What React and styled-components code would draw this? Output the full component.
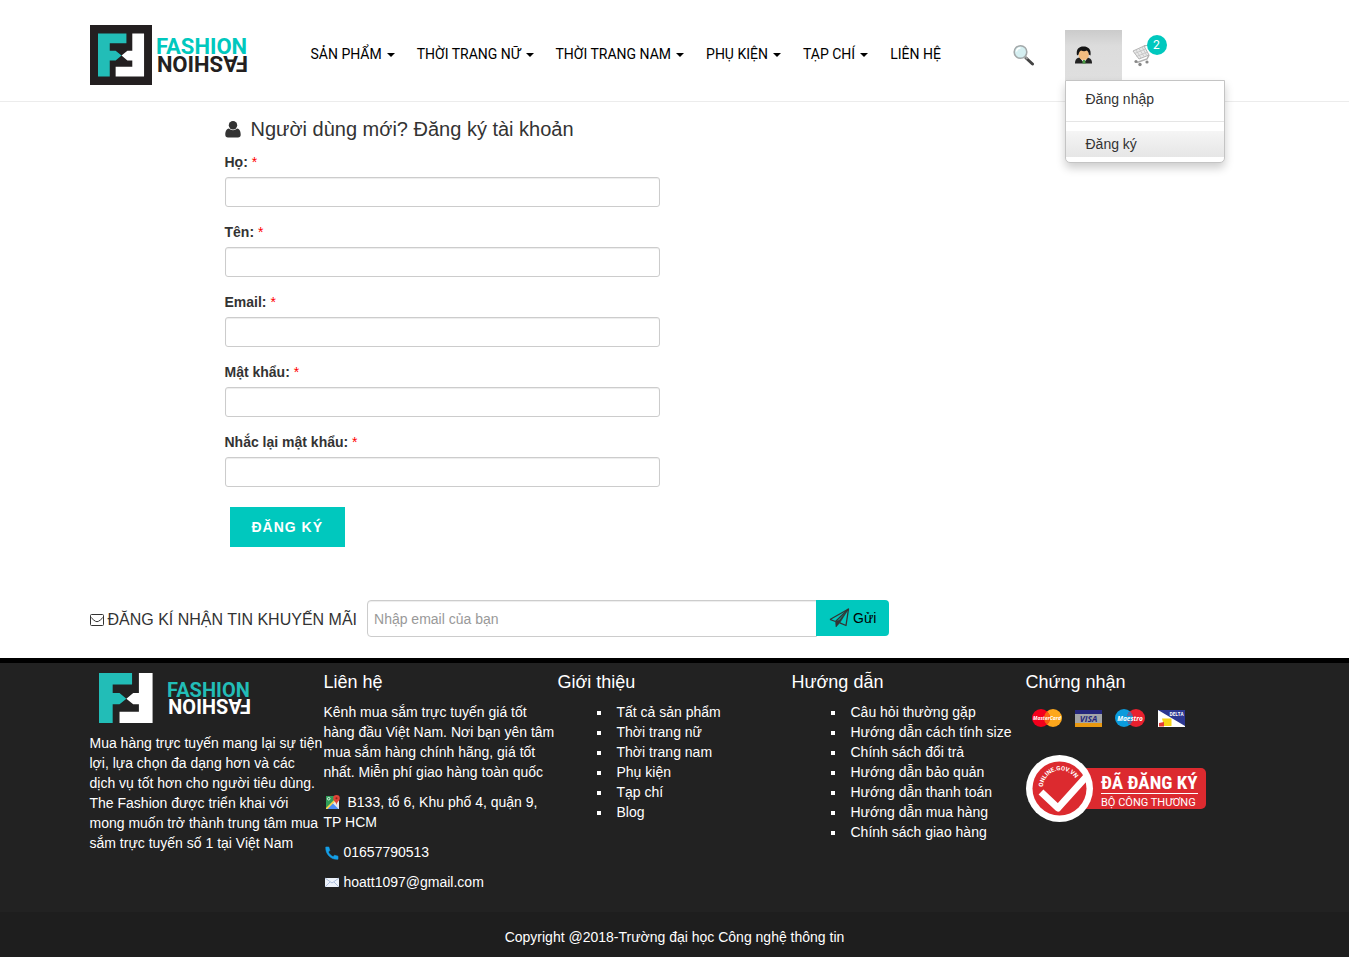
import React from "react";
import styled, { createGlobalStyle, css } from "styled-components";

const teal = "#00c8be";
const sans = '"Liberation Sans", Arial, sans-serif';

const GlobalStyle = createGlobalStyle`
  *, *::before, *::after { box-sizing: border-box; }
  body {
    margin: 0;
    background: #fff;
    color: #333;
    font: 14px/20px ${sans};
  }
  a { color: inherit; text-decoration: none; }
  p, h2, h3, ul { margin: 0; padding: 0; font-weight: 400; }
  svg { display: block; flex: none; }
`;

const Container = styled.div`
  width: 100%;
  max-width: 1170px;
  margin: 0 auto;
`;

/* ---------- header ---------- */

const Header = styled.header`
  border-bottom: 1px solid #ececec;
`;

const HeaderRow = styled(Container)`
  display: flex;
  align-items: flex-start;
  padding: 25px 0 16px;
`;

const Nav = styled.nav`
  display: flex;
  margin: 19px 0 0 52px;
`;

const NavLink = styled.a`
  display: flex;
  align-items: center;
  gap: 5px;
  padding: 0 11px;
  color: #000;
  font: 14px/20px Roboto, ${sans};
  white-space: nowrap;
`;

const Caret = styled.span`
  margin-top: 2px;
  border: 4px solid transparent;
  border-top-color: #000;
  border-bottom-width: 0;
`;

const Tools = styled.div`
  display: flex;
  align-items: flex-start;
  margin: 5px 106px 0 auto;
`;

const IconButton = styled.button`
  display: flex;
  align-items: center;
  width: 57px;
  height: 50px;
  padding: 0 5px;
  border: 0;
  background: none;
  ${(p) =>
    p.$open &&
    css`
      padding: 0 10px;
      background: linear-gradient(#cbcbcb, #dcdcdc 16px, #dfdfdf);
    `}
`;

const MenuHolder = styled.div`
  position: relative;
`;

const Menu = styled.ul`
  position: absolute;
  top: 100%;
  left: 0;
  z-index: 2;
  width: 160px;
  padding: 5px 0;
  list-style: none;
  background: #fff;
  border: 1px solid #c4c4c4;
  border-radius: 0 0 5px 5px;
  box-shadow: 0 5px 10px rgba(0, 0, 0, 0.2);
`;

const MenuLink = styled.a`
  display: block;
  padding: 3px 20px;
  ${(p) => p.$active && css`background: linear-gradient(#f5f5f5, #e6e6e6);`}
`;

const MenuDivider = styled.li`
  height: 1px;
  margin: 9px 0;
  background: #e5e5e5;
`;

const CartLink = styled.a`
  position: relative;
  display: block;
  margin: 15px 0 0 10px;
`;

const Count = styled.span`
  position: absolute;
  left: 15px;
  top: -10px;
  width: 20px;
  height: 20px;
  border-radius: 50%;
  background: ${teal};
  color: #fff;
  font: 12px/20px Inter, ${sans};
  text-align: center;
`;

/* ---------- registration form ---------- */

const Main = styled(Container)`
  padding: 17px 0 53px 135px;
`;

const FormTitle = styled.h2`
  display: flex;
  align-items: center;
  gap: 10px;
  margin-bottom: 13px;
  font-size: 20px;
  line-height: 20px;
`;

const Form = styled.form`
  width: 435px;
  max-width: 100%;
`;

const Field = styled.div`
  margin-bottom: 15px;
`;

const Label = styled.label`
  display: block;
  margin-bottom: 5px;
  font-weight: 700;
`;

const Required = styled.span`
  color: #f00;
  font-weight: 400;
`;

const TextInput = styled.input`
  display: block;
  width: 100%;
  height: 30px;
  padding: 4px 6px;
  border: 1px solid #ccc;
  border-radius: 3px;
  background: #fff;
  box-shadow: inset 0 1px 1px rgba(0, 0, 0, 0.075);
  font: inherit;
`;

const SubmitButton = styled.button`
  height: 40px;
  margin: 5px 0 0 5px;
  padding: 0 22px;
  border: 0;
  background: ${teal};
  color: #fff;
  font: 700 14px/20px ${sans};
  letter-spacing: 1px;
`;

/* ---------- newsletter ---------- */

const Newsletter = styled.form`
  display: flex;
  align-items: flex-start;
  width: 100%;
  max-width: 1170px;
  margin: 0 auto;
  padding-bottom: 18px;
`;

const NewsLabel = styled.label`
  display: flex;
  align-items: center;
  gap: 4px;
  height: 40px;
  margin-right: 10px;
  font-size: 16px;
  white-space: nowrap;
`;

const NewsInput = styled(TextInput)`
  width: 450px;
  height: 37px;
  border-radius: 4px 0 0 4px;
  &::placeholder { color: #999; opacity: 1; }
`;

const SendButton = styled.button`
  display: flex;
  align-items: center;
  gap: 2px;
  height: 36px;
  margin-left: -1px;
  padding: 0 13px;
  border: 0;
  border-radius: 0 4px 4px 0;
  background: ${teal};
  color: #000;
  font: 14px/20px ${sans};
`;

/* ---------- footer ---------- */

const Footer = styled.footer`
  border-top: 5px solid #000;
  background: #222;
  color: #fff;
`;

const FooterGrid = styled(Container)`
  display: grid;
  grid-template-columns: repeat(5, 1fr);
  padding: 9px 0 10px;
`;

const FooterTitle = styled.h3`
  margin-bottom: 10px;
  font-size: 18px;
  line-height: 20px;
`;

const Text = styled.p`
  margin-bottom: 10px;
`;

const InlineIcon = styled.span`
  display: inline-block;
  margin: 0 ${(p) => p.$gap}px 0 1px;
  vertical-align: -3px;
`;

const FooterLogo = styled.a`
  display: block;
  margin: 1px 0 10px 9px;
`;

const LinkList = styled.ul`
  padding-left: 54px;
  list-style: square;
  white-space: nowrap;
  li { padding-left: 5px; }
`;

const Cards = styled.div`
  display: flex;
  gap: 13px;
  margin: 17px 0 28px 6px;
`;

const Copyright = styled.div`
  padding: 15px 0 10px;
  background: #1e1e1e;
  text-align: center;
`;

/* ---------- drawings ---------- */

const Mark = ({ tealFill }) => (
  <>
    <path fill={tealFill} d="M0 0h29v10H12v7.500h6l6 5-6 5h-6V44H0z" />
    <path fill="#fff" d="M47 0H35v17.500h-5L24 22.500l6 5h5V34H18v10h29z" />
  </>
);

const HeaderLogo = () => (
  <svg width="158" height="60" viewBox="0 0 158 60" role="img" aria-label="Fashion">
    <rect width="62" height="60" fill="#231f20" />
    <g transform="translate(8 8.500) scale(.98)"><Mark tealFill="#22bdb7" /></g>
    <g fontFamily="Roboto, sans-serif" fontWeight="700" fontSize="22">
      <text x="66" y="28.500" fill={teal}>FASHION</text>
      <text transform="translate(158 31) rotate(180)" fill="#231f20">FASHION</text>
    </g>
  </svg>
);

const FooterLogoArt = () => (
  <svg width="154" height="50" viewBox="0 0 154 50" role="img" aria-label="Fashion">
    <g transform="scale(1.140)"><Mark tealFill="#22bdb7" /></g>
    <g fontFamily="Roboto, sans-serif" fontWeight="700" fontSize="20">
      <text x="68" y="24" fill="#22bdb7">FASHION</text>
      <text transform="translate(152 26) rotate(180)" fill="#fff">FASHION</text>
    </g>
  </svg>
);

const SearchIcon = () => (
  <svg width="22" height="22" viewBox="0 0 22 22">
    <path d="M13 14l6.500 6" stroke="#444" strokeWidth="3" strokeLinecap="round" />
    <path d="M12.500 13l2 2" stroke="#999" strokeWidth="2" />
    <circle cx="7.500" cy="8" r="6.300" fill="#d5eff1" stroke="#a3a9aa" strokeWidth="1.600" />
    <path d="M3.500 7.500a4 4 0 0 1 4-3.500" stroke="#fff" strokeWidth="1.500" fill="none" />
  </svg>
);

const AgentIcon = () => (
  <svg width="18" height="18" viewBox="0 0 18 18">
    <path d="M0 17.500c0-4 1.500-5.500 5-6h7c4 .5 5 2.500 5 6z" fill="#222" />
    <path d="M5.500 12.500h6.500L9 17z" fill="#fff" />
    <path d="M8 14h2l.7 3.500H7.300z" fill="#4b9b45" />
    <ellipse cx="8.700" cy="8.500" rx="5.200" ry="5.600" fill="#f3bd80" />
    <path d="M2 9.500C.8 3 4 .5 8.500.5s8 2.500 7 9l-1.700-1c.1-2-.8-3-2-4-2 1-4 .7-5.800 0C4.500 5.500 3.700 7 3.600 8.500z" fill="#151515" />
  </svg>
);

const CartIcon = () => (
  <svg width="22" height="22" viewBox="0 0 22 22" fill="none">
    <path d="M1 6l11-5 5 9-10 4z" fill="#e9e9e9" stroke="#b5b5b5" />
    <path d="M4 5l5 8M7 3.500l5 8M10 2l4.500 8M2.500 8.500l11-4.500M4.500 11.500l11-4.500" stroke="#c2c2c2" strokeWidth=".8" />
    <path d="M12 1l3-1h3M17 10l-2 4-10 3.500" stroke="#b2b2b2" strokeWidth="1.500" />
    <g fill="#888"><circle cx="4" cy="16.500" r="1.600" /><circle cx="8" cy="19.500" r="1.700" /><circle cx="15" cy="17" r="1.600" /></g>
  </svg>
);

const UserIcon = () => (
  <svg width="16" height="17" viewBox="0 0 16 17" fill="#333">
    <circle cx="8" cy="4.300" r="4.200" />
    <path d="M4 7.500c2.400 2.200 5.600 2.200 8 0 3 .5 3.700 3.500 3.700 6.200 0 1.800-1 2.800-2.700 2.800H3c-1.700 0-2.700-1-2.700-2.800 0-2.700.7-5.700 3.700-6.200z" />
  </svg>
);

const EnvelopeIcon = () => (
  <svg width="14" height="12" viewBox="0 0 14 12" fill="none" stroke="#333">
    <rect x=".5" y=".5" width="13" height="11" rx="1" />
    <path d="M.5 3c2 2 4.500 4.700 6.500 4.700S11.500 5 13.500 3" />
  </svg>
);

const PlaneIcon = () => (
  <svg width="22" height="20" viewBox="0 0 22 20" fill="none" stroke="#333" strokeWidth="1.300" strokeLinejoin="round">
    <path d="M1 11.500L19.500 1 17 17.500l-6.200-2.700M1 11.500l5.500 2" />
    <path d="M19.500 1L6.500 13.500" />
    <path d="M6.500 13.500L7 19l3.800-4.200L19.500 1l-9 11z" fill="#333" strokeWidth=".5" />
  </svg>
);

const MapIcon = () => (
  <svg width="15" height="15" viewBox="0 0 15 15">
    <rect x="1" y="1" width="13" height="13" fill="#e8e8e8" />
    <path d="M1 1h10v4L1 14z" fill="#2f9d58" />
    <path d="M7 7.500L13.500 14H1.500z" fill="#4c8df5" />
    <path d="M9 5l-8 8v1h1.500L10 6.500z" fill="#fbd24a" />
    <circle cx="3.700" cy="3.700" r="1.300" fill="none" stroke="#fff" strokeWidth=".8" />
    <path d="M11.500 0A3.300 3.300 0 0 1 14.800 3.300C14.800 6 12 6.500 11.500 10 11 6.500 8.200 6 8.200 3.300A3.300 3.300 0 0 1 11.500 0z" fill="#e04438" />
    <circle cx="11.500" cy="3.300" r="1" fill="#8c231b" />
  </svg>
);

const PhoneIcon = () => (
  <svg width="14" height="14" viewBox="0 0 14 14">
    <path d="M.8 1h3l1 3.500-1.500 1.500c1 2 2.700 3.700 4.700 4.700L9.500 9.200l3.500 1v3C6 14 .2 8 .8 1z" fill="#14a0e8" stroke="#14a0e8" strokeWidth=".6" strokeLinejoin="round" />
  </svg>
);

const MailIcon = () => (
  <svg width="15" height="14" viewBox="0 0 15 14">
    <rect y="2" width="14" height="9" rx=".5" fill="#eef3fb" />
    <path d="M0 2l7 5 7-5M0 11l5-5M14 11L9 6" fill="none" stroke="#aebfdd" />
  </svg>
);

const cardText = {
  fontFamily: "Open Sans, sans-serif",
  fontWeight: 700,
  fontStyle: "italic",
  fill: "#fff",
  textAnchor: "middle",
};

const MasterCard = () => (
  <svg width="30" height="18" viewBox="0 0 30 18" role="img" aria-label="MasterCard">
    <circle cx="21" cy="9" r="9" fill="#fda71c" />
    <circle cx="9" cy="9" r="9" fill="#f3001c" />
    <path d="M15 2.300a9 9 0 0 1 0 13.400 9 9 0 0 1 0-13.400z" fill="#f9600f" />
    <text x="15" y="11" fontSize="5" {...cardText}>MasterCard</text>
  </svg>
);

const Visa = () => (
  <svg width="27" height="18" viewBox="0 0 27 18" role="img" aria-label="Visa">
    <path d="M0 1h27v4H0z" fill="#25277c" />
    <path d="M0 5h27v9H0z" fill="#a3a5a8" />
    <path d="M0 14h27v4H0z" fill="#e89810" />
    <text x="13.500" y="12.500" fontSize="8.500" {...cardText} fill="#25277c">VISA</text>
  </svg>
);

const Maestro = () => (
  <svg width="30" height="18" viewBox="0 0 30 18" role="img" aria-label="Maestro">
    <circle cx="21" cy="9" r="9" fill="#e9202e" />
    <circle cx="9" cy="9" r="9" fill="#0b9bdc" />
    <path d="M13 4h4M12 6h6M12 12h6M13 14h4" stroke="#b0335a" />
    <text x="15" y="11.500" fontSize="6.500" {...cardText}>Maestro</text>
  </svg>
);

const Delta = () => (
  <svg width="27" height="18" viewBox="0 0 27 18" role="img" aria-label="Delta">
    <path d="M0 1h27v17H0z" fill="#fff" />
    <path d="M0 1h27v16z" fill="#2c3792" />
    <path d="M4 9.500h9.500V17H6z" fill="#f7d417" />
    <path d="M1 14l5-1v4.500H1z" fill="#e43a34" />
    <text x="18.500" y="7" fontSize="4.500" {...cardText} fontStyle="normal">DELTA</text>
  </svg>
);

const Certificate = () => (
  <svg width="181" height="67" viewBox="0 0 181 67" role="img" aria-label="Đã đăng ký Bộ Công Thương">
    <rect x="40" y="13" width="140" height="41" rx="5" fill="#dc2a2f" />
    <circle cx="33.500" cy="33.500" r="33.500" fill="#fff" />
    <circle cx="33.500" cy="33.500" r="27" fill="#dc2a2f" />
    <path d="M15 37l17 16 28-31" fill="none" stroke="#fff" strokeWidth="7" strokeLinejoin="round" />
    <defs><path id="seal-arc" d="M17 32a17.500 17.500 0 0 1 34-5" /></defs>
    <g fill="#fff" fontFamily="Roboto, sans-serif">
      <text fontSize="6" fontWeight="700"><textPath href="#seal-arc">ONLINE.GOV.VN</textPath></text>
      <text x="75" y="34" fontSize="19" fontWeight="700" fontFamily="Roboto Condensed, Roboto, sans-serif">ĐÃ ĐĂNG KÝ</text>
      <text x="75" y="51" fontSize="11">BỘ CÔNG THƯƠNG</text>
    </g>
    <path d="M75 38.500h97" stroke="#fff" />
  </svg>
);

/* ---------- content ---------- */

const navItems = ["SẢN PHẨM", "THỜI TRANG NỮ", "THỜI TRANG NAM", "PHỤ KIỆN", "TẠP CHÍ"];

const fields = [
  { id: "last-name", label: "Họ:", type: "text" },
  { id: "first-name", label: "Tên:", type: "text" },
  { id: "email", label: "Email:", type: "email" },
  { id: "password", label: "Mật khẩu:", type: "password" },
  { id: "password-again", label: "Nhắc lại mật khẩu:", type: "password" },
];

const linkGroups = [
  {
    title: "Giới thiệu",
    links: ["Tất cả sản phẩm", "Thời trang nữ", "Thời trang nam", "Phụ kiện", "Tạp chí", "Blog"],
  },
  {
    title: "Hướng dẫn",
    links: [
      "Câu hỏi thường gặp",
      "Hướng dẫn cách tính size",
      "Chính sách đổi trả",
      "Hướng dẫn bảo quản",
      "Hướng dẫn thanh toán",
      "Hướng dẫn mua hàng",
      "Chính sách giao hàng",
    ],
  },
];

export default function App() {
  return (
    <>
      <GlobalStyle />
      <Header>
        <HeaderRow>
          <a href="#home"><HeaderLogo /></a>
          <Nav>
            {navItems.map((item) => (
              <NavLink href="#menu" key={item}>{item}<Caret /></NavLink>
            ))}
            <NavLink href="#contact">LIÊN HỆ</NavLink>
          </Nav>
          <Tools>
            <IconButton type="button" aria-label="Tìm kiếm"><SearchIcon /></IconButton>
            <MenuHolder>
              <IconButton type="button" $open aria-label="Tài khoản" aria-expanded="true"><AgentIcon /></IconButton>
              <Menu>
                <li><MenuLink href="#login">Đăng nhập</MenuLink></li>
                <MenuDivider role="separator" />
                <li><MenuLink href="#register" $active>Đăng ký</MenuLink></li>
              </Menu>
            </MenuHolder>
            <CartLink href="#cart" aria-label="Giỏ hàng">
              <CartIcon />
              <Count>2</Count>
            </CartLink>
          </Tools>
        </HeaderRow>
      </Header>

      <Main as="main">
        <FormTitle><UserIcon />Người dùng mới? Đăng ký tài khoản</FormTitle>
        <Form>
          {fields.map((f) => (
            <Field key={f.id}>
              <Label htmlFor={f.id}>{f.label} <Required>*</Required></Label>
              <TextInput id={f.id} type={f.type} />
            </Field>
          ))}
          <SubmitButton type="submit">ĐĂNG KÝ</SubmitButton>
        </Form>
      </Main>

      <Newsletter>
        <NewsLabel htmlFor="news-email"><EnvelopeIcon />ĐĂNG KÍ NHẬN TIN KHUYẾN MÃI</NewsLabel>
        <NewsInput id="news-email" type="email" placeholder="Nhập email của bạn" />
        <SendButton type="submit"><PlaneIcon />Gửi</SendButton>
      </Newsletter>

      <Footer>
        <FooterGrid>
          <div>
            <FooterLogo href="#home"><FooterLogoArt /></FooterLogo>
            <Text>
              Mua hàng trực tuyến mang lại sự tiện lợi, lựa chọn đa dạng hơn và các dịch vụ tốt hơn cho
              người tiêu dùng. The Fashion được triển khai với mong muốn trở thành trung tâm mua sắm
              trực tuyến số 1 tại Việt Nam
            </Text>
          </div>
          <div>
            <FooterTitle>Liên hệ</FooterTitle>
            <Text>
              Kênh mua sắm trực tuyến giá tốt hàng đầu Việt Nam. Nơi bạn yên tâm mua sắm hàng chính
              hãng, giá tốt nhất. Miễn phí giao hàng toàn quốc
            </Text>
            <Text><InlineIcon $gap={8}><MapIcon /></InlineIcon>B133, tổ 6, Khu phố 4, quận 9, TP HCM</Text>
            <Text><InlineIcon $gap={5}><PhoneIcon /></InlineIcon>01657790513</Text>
            <Text><InlineIcon $gap={4}><MailIcon /></InlineIcon>hoatt1097@gmail.com</Text>
          </div>
          {linkGroups.map((g) => (
            <div key={g.title}>
              <FooterTitle>{g.title}</FooterTitle>
              <LinkList>
                {g.links.map((l) => (
                  <li key={l}><a href="#info">{l}</a></li>
                ))}
              </LinkList>
            </div>
          ))}
          <div>
            <FooterTitle>Chứng nhận</FooterTitle>
            <Cards><MasterCard /><Visa /><Maestro /><Delta /></Cards>
            <Certificate />
          </div>
        </FooterGrid>
        <Copyright>Copyright @2018-Trường đại học Công nghệ thông tin</Copyright>
      </Footer>
    </>
  );
}
